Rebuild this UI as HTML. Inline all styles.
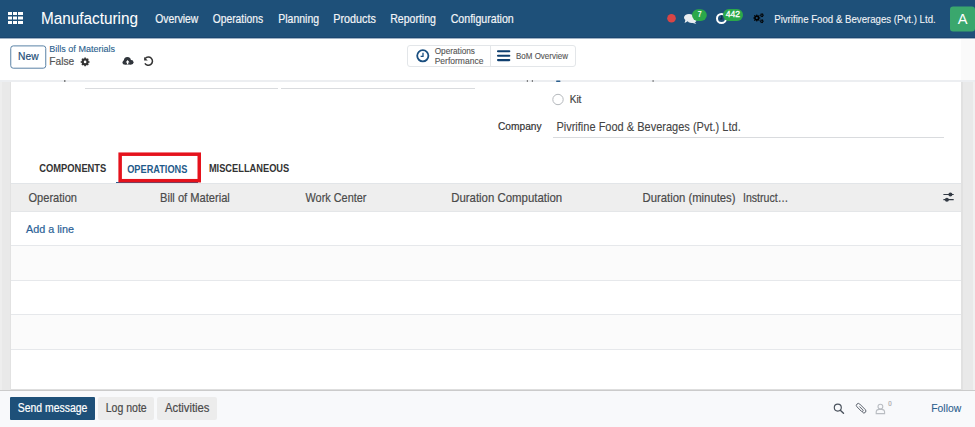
<!DOCTYPE html>
<html><head><meta charset="utf-8"><title>Bills of Materials</title>
<style>
*{margin:0;padding:0;box-sizing:border-box}
html,body{width:975px;height:427px;overflow:hidden;background:#fff;font-family:"Liberation Sans",sans-serif}
.a{position:absolute}
svg text{font-family:"Liberation Sans",sans-serif}
</style></head><body>
<header class="a" style="left:0;top:0;width:975px;height:37px;background:#1e5079"></header>
<div class="a" style="left:0;top:37px;width:975px;height:1px;background:#1a4670"></div>
<div class="a" style="left:0;top:38px;width:975px;height:1px;background:#9fb2c4"></div>
<div class="a" style="left:0;top:39px;width:975px;height:41px;background:#fff"></div>
<div class="a" style="left:961px;top:39px;width:14px;height:41px;background:#fafafa"></div>
<main class="a" style="left:0;top:80px;width:975px;height:311px;background:#e9e9e9"></main>
<div class="a" style="left:0;top:80px;width:975px;height:2px;background:#eceef1"></div>
<div class="a" style="left:0;top:82px;width:2px;height:308px;background:#eeeeee"></div>
<div class="a" style="left:10px;top:82px;width:1px;height:308px;background:#e2e2e2"></div>
<div class="a" style="left:961px;top:82px;width:2px;height:308px;background:#e1e1e1"></div>
<div class="a" style="left:973px;top:82px;width:2px;height:308px;background:#f1f1f1"></div>
<div class="a" style="left:11px;top:82px;width:950px;height:307px;background:#fff"></div>
<div class="a" style="left:11px;top:389px;width:950px;height:1px;background:#dedede"></div>
<div class="a" style="left:0;top:390px;width:975px;height:1px;background:#cbcbcb"></div>
<footer class="a" style="left:0;top:391px;width:975px;height:36px;background:#f8f9fb"></footer>
<!-- form underlines -->
<div class="a" style="left:85px;top:88px;width:193px;height:1px;background:#d9dbde"></div>
<div class="a" style="left:281px;top:88px;width:194px;height:1px;background:#d9dbde"></div>
<div class="a" style="left:553px;top:137px;width:391px;height:1px;background:#d9dbde"></div>
<!-- notebook tab -->
<div class="a" style="left:116px;top:182px;width:82px;height:2px;background:#2b5f8e"></div>

<!-- list table -->
<div class="a" style="left:11px;top:183px;width:950px;height:29px;background:#eeeeee;border-top:1px solid #e2e5e8;border-bottom:1px solid #e4e6e8"></div>
<div class="a" style="left:11px;top:245px;width:950px;height:35px;background:#fbfbfb;border-top:1px solid #e6e8eb"></div>
<div class="a" style="left:11px;top:280px;width:950px;height:34px;border-top:1px solid #e6e8eb"></div>
<div class="a" style="left:11px;top:314px;width:950px;height:35px;background:#fbfbfb;border-top:1px solid #e6e8eb"></div>
<div class="a" style="left:11px;top:349px;width:950px;height:1px;background:#e6e8eb"></div>
<!-- buttons -->
<div class="a" style="left:407px;top:45px;width:169px;height:22px;border:1px solid #e3e6e9;border-radius:3px"></div>
<div class="a" style="left:490px;top:45px;width:1px;height:22px;background:#e3e6e9"></div>
<div class="a" style="left:10px;top:397px;width:85px;height:23px;background:#1e5079;border-radius:1px"></div>
<div class="a" style="left:98px;top:397px;width:56px;height:23px;background:#ececec;border-radius:2px"></div>
<div class="a" style="left:157px;top:397px;width:60px;height:23px;background:#ececec;border-radius:2px"></div>
<svg class="a" style="left:0;top:0" width="975" height="427" viewBox="0 0 975 427">

<g fill="#ffffff">
<rect x="8" y="12" width="4" height="3"/><rect x="13" y="12" width="4" height="3"/><rect x="18" y="12" width="5" height="3"/>
<rect x="8" y="16.5" width="4" height="3"/><rect x="13" y="16.5" width="4" height="3"/><rect x="18" y="16.5" width="5" height="3"/>
<rect x="8" y="21" width="4" height="3"/><rect x="13" y="21" width="4" height="3"/><rect x="18" y="21" width="5" height="3"/>
</g>
<circle cx="671.5" cy="18.3" r="4.3" fill="#d94545"/>
<g fill="#e9edf1">
<ellipse cx="689" cy="17.5" rx="5" ry="3.6"/>
<path d="M685.5 19.5 L684.6 23 L689 20.6 Z"/>
<ellipse cx="692" cy="20" rx="4.5" ry="3"/>
<path d="M694 21.5 L696.3 24 L691 22.5 Z"/>
</g>
<rect x="692" y="9.2" width="14.8" height="11.8" rx="5.9" fill="#2ba84a"/>
<circle cx="721.5" cy="18.5" r="4.5" fill="none" stroke="#ffffff" stroke-width="2"/>
<path d="M721.8 15.6 V18.8 H719.9" fill="none" stroke="#0c2a48" stroke-width="1.2"/>
<rect x="723" y="9.1" width="20" height="11.9" rx="5.9" fill="#2ba84a"/>
<path d="M759.29 16.97 L759.46 17.53 L760.36 17.49 L760.36 18.51 L759.46 18.47 L759.29 19.03 L759.02 19.54 L759.68 20.16 L758.96 20.88 L758.34 20.22 L757.83 20.49 L757.27 20.66 L757.31 21.56 L756.29 21.56 L756.33 20.66 L755.77 20.49 L755.26 20.22 L754.64 20.88 L753.92 20.16 L754.58 19.54 L754.31 19.03 L754.14 18.47 L753.24 18.51 L753.24 17.49 L754.14 17.53 L754.31 16.97 L754.58 16.46 L753.92 15.84 L754.64 15.12 L755.26 15.78 L755.77 15.51 L756.33 15.34 L756.29 14.44 L757.31 14.44 L757.27 15.34 L757.83 15.51 L758.34 15.78 L758.96 15.12 L759.68 15.84 L759.02 16.46 Z M757.90 18.00 A1.1 1.1 0 1 0 755.70 18.00 A1.1 1.1 0 1 0 757.90 18.00 Z" fill="#000" fill-rule="evenodd"/><path d="M763.20 14.45 L763.36 14.85 L763.96 14.81 L763.96 15.59 L763.36 15.55 L763.20 15.95 L762.93 16.29 L763.27 16.79 L762.59 17.18 L762.33 16.64 L761.90 16.70 L761.47 16.64 L761.21 17.18 L760.53 16.79 L760.87 16.29 L760.60 15.95 L760.44 15.55 L759.84 15.59 L759.84 14.81 L760.44 14.85 L760.60 14.45 L760.87 14.11 L760.53 13.61 L761.21 13.22 L761.47 13.76 L761.90 13.70 L762.33 13.76 L762.59 13.22 L763.27 13.61 L762.93 14.11 Z M762.50 15.20 A0.6 0.6 0 1 0 761.30 15.20 A0.6 0.6 0 1 0 762.50 15.20 Z" fill="#000" fill-rule="evenodd"/><path d="M763.10 20.45 L763.26 20.85 L763.86 20.81 L763.86 21.59 L763.26 21.55 L763.10 21.95 L762.83 22.29 L763.17 22.79 L762.49 23.18 L762.23 22.64 L761.80 22.70 L761.37 22.64 L761.11 23.18 L760.43 22.79 L760.77 22.29 L760.50 21.95 L760.34 21.55 L759.74 21.59 L759.74 20.81 L760.34 20.85 L760.50 20.45 L760.77 20.11 L760.43 19.61 L761.11 19.22 L761.37 19.76 L761.80 19.70 L762.23 19.76 L762.49 19.22 L763.17 19.61 L762.83 20.11 Z M762.40 21.20 A0.6 0.6 0 1 0 761.20 21.20 A0.6 0.6 0 1 0 762.40 21.20 Z" fill="#000" fill-rule="evenodd"/>
<rect x="950" y="6.4" width="25" height="25.2" rx="3" fill="#3aa76d"/>
<!-- control panel icons -->
<rect x="10.75" y="45.9" width="35" height="22.3" rx="2.5" fill="none" stroke="#5a82a6" stroke-width="1"/>
<path d="M88.43 60.52 L88.62 61.13 L89.53 61.13 L89.53 62.67 L88.62 62.67 L88.43 63.28 L88.13 63.84 L88.78 64.49 L87.69 65.58 L87.04 64.93 L86.48 65.23 L85.87 65.42 L85.87 66.33 L84.33 66.33 L84.33 65.42 L83.72 65.23 L83.16 64.93 L82.51 65.58 L81.42 64.49 L82.07 63.84 L81.77 63.28 L81.58 62.67 L80.67 62.67 L80.67 61.13 L81.58 61.13 L81.77 60.52 L82.07 59.96 L81.42 59.31 L82.51 58.22 L83.16 58.87 L83.72 58.57 L84.33 58.38 L84.33 57.47 L85.87 57.47 L85.87 58.38 L86.48 58.57 L87.04 58.87 L87.69 58.22 L88.78 59.31 L88.13 59.96 Z M86.40 61.90 A1.3 1.3 0 1 0 83.80 61.90 A1.3 1.3 0 1 0 86.40 61.90 Z" fill="#333" fill-rule="evenodd"/>
<g fill="#30353b"><circle cx="127.4" cy="60.5" r="3.5"/><circle cx="131.2" cy="62.3" r="2.3"/><circle cx="124.7" cy="62.4" r="2.2"/><rect x="124.7" y="60.5" width="6.5" height="4.1"/></g>
<path d="M127.6 64.3 V61.2" stroke="#fff" stroke-width="1.3"/><path d="M125.7 62.4 L127.6 60 L129.5 62.4 Z" fill="#fff"/>
<path d="M145.2 58.5 A4.1 4.1 0 1 1 144.9 63.3" fill="none" stroke="#333" stroke-width="1.5"/>
<path d="M144.1 56.9 L144.1 60.6 L147.8 60.6 Z" fill="#333"/>
<circle cx="422.8" cy="55.8" r="5.6" fill="none" stroke="#1a4f80" stroke-width="1.8"/>
<path d="M423 52.8 V56.3 H420.6" fill="none" stroke="#1a4f80" stroke-width="1.3"/>
<g stroke="#0f3f6f" stroke-width="2.1" stroke-linecap="round">
<path d="M498 51.3 H509.3 M498 55.8 H509.3 M498 60.1 H509.3"/>
</g>
<rect x="120.15" y="154.2" width="79.1" height="26.5" fill="none" stroke="#e5121c" stroke-width="3.5"/>
<rect x="64" y="80.3" width="1.5" height="1.4" fill="#555"/>
<rect x="526.8" y="80.3" width="1.2" height="1.4" fill="#555"/>
<rect x="531.8" y="80.3" width="1.2" height="1.4" fill="#555"/>
<rect x="556" y="80.5" width="4.5" height="1.6" rx="0.8" fill="#2b5f8e"/>
<rect x="652.5" y="80.3" width="1.2" height="1.4" fill="#555"/>
<circle cx="558" cy="99.5" r="5.2" fill="#fff" stroke="#b5b9bd" stroke-width="1"/>
<g stroke="#333a44" stroke-width="1.2">
<path d="M943.4 194.5 H953.7 M943.4 199.7 H953.7"/>
</g>
<circle cx="950.4" cy="194.5" r="2" fill="#333a44"/>
<circle cx="946.9" cy="199.7" r="2" fill="#333a44"/>
<circle cx="837.8" cy="407.6" r="3.5" fill="none" stroke="#4a525c" stroke-width="1.15"/>
<path d="M840.3 410.2 L843.5 413.3" stroke="#4a525c" stroke-width="1.4" stroke-linecap="round"/>
<g transform="translate(860.9 408) rotate(-45) scale(0.82)">
<path d="M0 -2.6 V3.3 A1.2 1.2 0 0 1 -2.4 3.3 V-4.4 A2.4 2.4 0 0 1 2.4 -4.4 V5.2 A2.4 2.4 0 0 1 -2.4 5.2" fill="none" stroke="#4d5560" stroke-width="1.05"/>
</g>
<circle cx="880.4" cy="406.6" r="2.4" fill="none" stroke="#b9bdc2" stroke-width="1.1"/>
<path d="M876.2 413.6 V411.8 A3 2.6 0 0 1 879.2 409.4 H881.6 A3 2.6 0 0 1 884.6 411.8 V413.6 Z" fill="none" stroke="#b9bdc2" stroke-width="1.1"/>

<text x="41.00" y="23.80" font-size="15.70" fill="#ffffff" stroke="#ffffff" stroke-width="0.05" textLength="97.03" lengthAdjust="spacingAndGlyphs" >Manufacturing</text>
<text x="155.20" y="22.50" font-size="12.06" fill="#f2f4f7" stroke="#f2f4f7" stroke-width="0.2" textLength="43.17" lengthAdjust="spacingAndGlyphs" >Overview</text>
<text x="212.80" y="22.50" font-size="12.06" fill="#f2f4f7" stroke="#f2f4f7" stroke-width="0.2" textLength="50.22" lengthAdjust="spacingAndGlyphs" >Operations</text>
<text x="278.30" y="22.50" font-size="12.06" fill="#f2f4f7" stroke="#f2f4f7" stroke-width="0.2" textLength="40.72" lengthAdjust="spacingAndGlyphs" >Planning</text>
<text x="333.30" y="22.50" font-size="12.06" fill="#f2f4f7" stroke="#f2f4f7" stroke-width="0.2" textLength="42.52" lengthAdjust="spacingAndGlyphs" >Products</text>
<text x="390.20" y="22.50" font-size="12.06" fill="#f2f4f7" stroke="#f2f4f7" stroke-width="0.2" textLength="45.71" lengthAdjust="spacingAndGlyphs" >Reporting</text>
<text x="450.70" y="22.50" font-size="12.06" fill="#f2f4f7" stroke="#f2f4f7" stroke-width="0.2" textLength="63.08" lengthAdjust="spacingAndGlyphs" >Configuration</text>
<text x="774.20" y="22.70" font-size="11.05" fill="#f2f4f7" stroke="#f2f4f7" stroke-width="0.1" textLength="161.50" lengthAdjust="spacingAndGlyphs" >Pivrifine Food &amp; Beverages (Pvt.) Ltd.</text>
<text x="18.10" y="59.70" font-size="10.61" fill="#1f4e78" stroke="#1f4e78" stroke-width="0.2" textLength="20.45" lengthAdjust="spacingAndGlyphs" >New</text>
<text x="49.30" y="52.40" font-size="9.01" fill="#2b5f8e" stroke="#2b5f8e" stroke-width="0.12" textLength="65.70" lengthAdjust="spacingAndGlyphs" >Bills of Materials</text>
<text x="49.30" y="65.40" font-size="11.19" fill="#555555" stroke="#555555" stroke-width="0.2" textLength="24.90" lengthAdjust="spacingAndGlyphs" >False</text>
<text x="434.70" y="53.60" font-size="9.01" fill="#555555" stroke="#555555" stroke-width="0.12" textLength="40.31" lengthAdjust="spacingAndGlyphs" >Operations</text>
<text x="434.70" y="63.70" font-size="9.01" fill="#555555" stroke="#555555" stroke-width="0.12" textLength="48.70" lengthAdjust="spacingAndGlyphs" >Performance</text>
<text x="516.00" y="58.80" font-size="9.01" fill="#555555" stroke="#555555" stroke-width="0.12" textLength="51.97" lengthAdjust="spacingAndGlyphs" >BoM Overview</text>
<text x="569.70" y="103.00" font-size="10.90" fill="#444444" stroke="#444444" stroke-width="0.2" textLength="11.72" lengthAdjust="spacingAndGlyphs" >Kit</text>
<text x="498.00" y="129.70" font-size="10.90" fill="#333333" stroke="#333333" stroke-width="0.2" textLength="43.60" lengthAdjust="spacingAndGlyphs" >Company</text>
<text x="556.40" y="131.40" font-size="11.92" fill="#444444" stroke="#444444" stroke-width="0.1" textLength="184.30" lengthAdjust="spacingAndGlyphs" >Pivrifine Food &amp; Beverages (Pvt.) Ltd.</text>
<text x="39.30" y="172.40" font-size="10.47" font-weight="bold" fill="#333333" stroke="#333333" stroke-width="0" textLength="67.02" lengthAdjust="spacingAndGlyphs" >COMPONENTS</text>
<text x="127.20" y="172.80" font-size="10.90" font-weight="bold" fill="#1f5a8a" stroke="#1f5a8a" stroke-width="0" textLength="60.18" lengthAdjust="spacingAndGlyphs" >OPERATIONS</text>
<text x="208.90" y="172.40" font-size="10.47" font-weight="bold" fill="#333333" stroke="#333333" stroke-width="0" textLength="80.32" lengthAdjust="spacingAndGlyphs" >MISCELLANEOUS</text>
<text x="28.50" y="201.70" font-size="12.94" fill="#4a4a4a" stroke="#4a4a4a" stroke-width="0.2" textLength="48.52" lengthAdjust="spacingAndGlyphs" >Operation</text>
<text x="160.00" y="201.70" font-size="12.94" fill="#4a4a4a" stroke="#4a4a4a" stroke-width="0.2" textLength="69.80" lengthAdjust="spacingAndGlyphs" >Bill of Material</text>
<text x="305.50" y="201.70" font-size="12.94" fill="#4a4a4a" stroke="#4a4a4a" stroke-width="0.2" textLength="60.89" lengthAdjust="spacingAndGlyphs" >Work Center</text>
<text x="451.20" y="201.70" font-size="12.94" fill="#4a4a4a" stroke="#4a4a4a" stroke-width="0.2" textLength="110.98" lengthAdjust="spacingAndGlyphs" >Duration Computation</text>
<text x="642.60" y="201.70" font-size="12.94" fill="#4a4a4a" stroke="#4a4a4a" stroke-width="0.2" textLength="92.90" lengthAdjust="spacingAndGlyphs" >Duration (minutes)</text>
<text x="743.00" y="201.70" font-size="12.94" fill="#4a4a4a" stroke="#4a4a4a" stroke-width="0.2" textLength="45.29" lengthAdjust="spacingAndGlyphs" >Instruct…</text>
<text x="26.00" y="232.90" font-size="11.48" fill="#2b6196" stroke="#2b6196" stroke-width="0.2" textLength="47.98" lengthAdjust="spacingAndGlyphs" >Add a line</text>
<text x="17.70" y="412.30" font-size="12.65" fill="#ffffff" stroke="#ffffff" stroke-width="0.2" textLength="69.61" lengthAdjust="spacingAndGlyphs" >Send message</text>
<text x="105.70" y="412.30" font-size="12.65" fill="#4a4a4a" stroke="#4a4a4a" stroke-width="0.2" textLength="40.98" lengthAdjust="spacingAndGlyphs" >Log note</text>
<text x="165.10" y="412.30" font-size="12.65" fill="#4a4a4a" stroke="#4a4a4a" stroke-width="0.2" textLength="44.40" lengthAdjust="spacingAndGlyphs" >Activities</text>
<text x="697.80" y="17.10" font-size="8.28" fill="#ffffff" stroke="#ffffff" stroke-width="0.2" textLength="3.81" lengthAdjust="spacingAndGlyphs" >7</text>
<text x="725.70" y="17.30" font-size="8.58" fill="#ffffff" stroke="#ffffff" stroke-width="0.3" textLength="14.29" lengthAdjust="spacingAndGlyphs" >442</text>
<text x="957.80" y="23.90" font-size="14.68" fill="#ffffff" stroke="#ffffff" stroke-width="0" textLength="9.76" lengthAdjust="spacingAndGlyphs" >A</text>
<text x="888.20" y="406.20" font-size="7.12" fill="#aaaaaa" stroke="#aaaaaa" stroke-width="0.2" textLength="3.41" lengthAdjust="spacingAndGlyphs" >0</text>
<text x="931.30" y="411.70" font-size="11.19" fill="#2b5f8e" stroke="#2b5f8e" stroke-width="0.1" textLength="29.85" lengthAdjust="spacingAndGlyphs" >Follow</text>
</svg>
</body></html>
